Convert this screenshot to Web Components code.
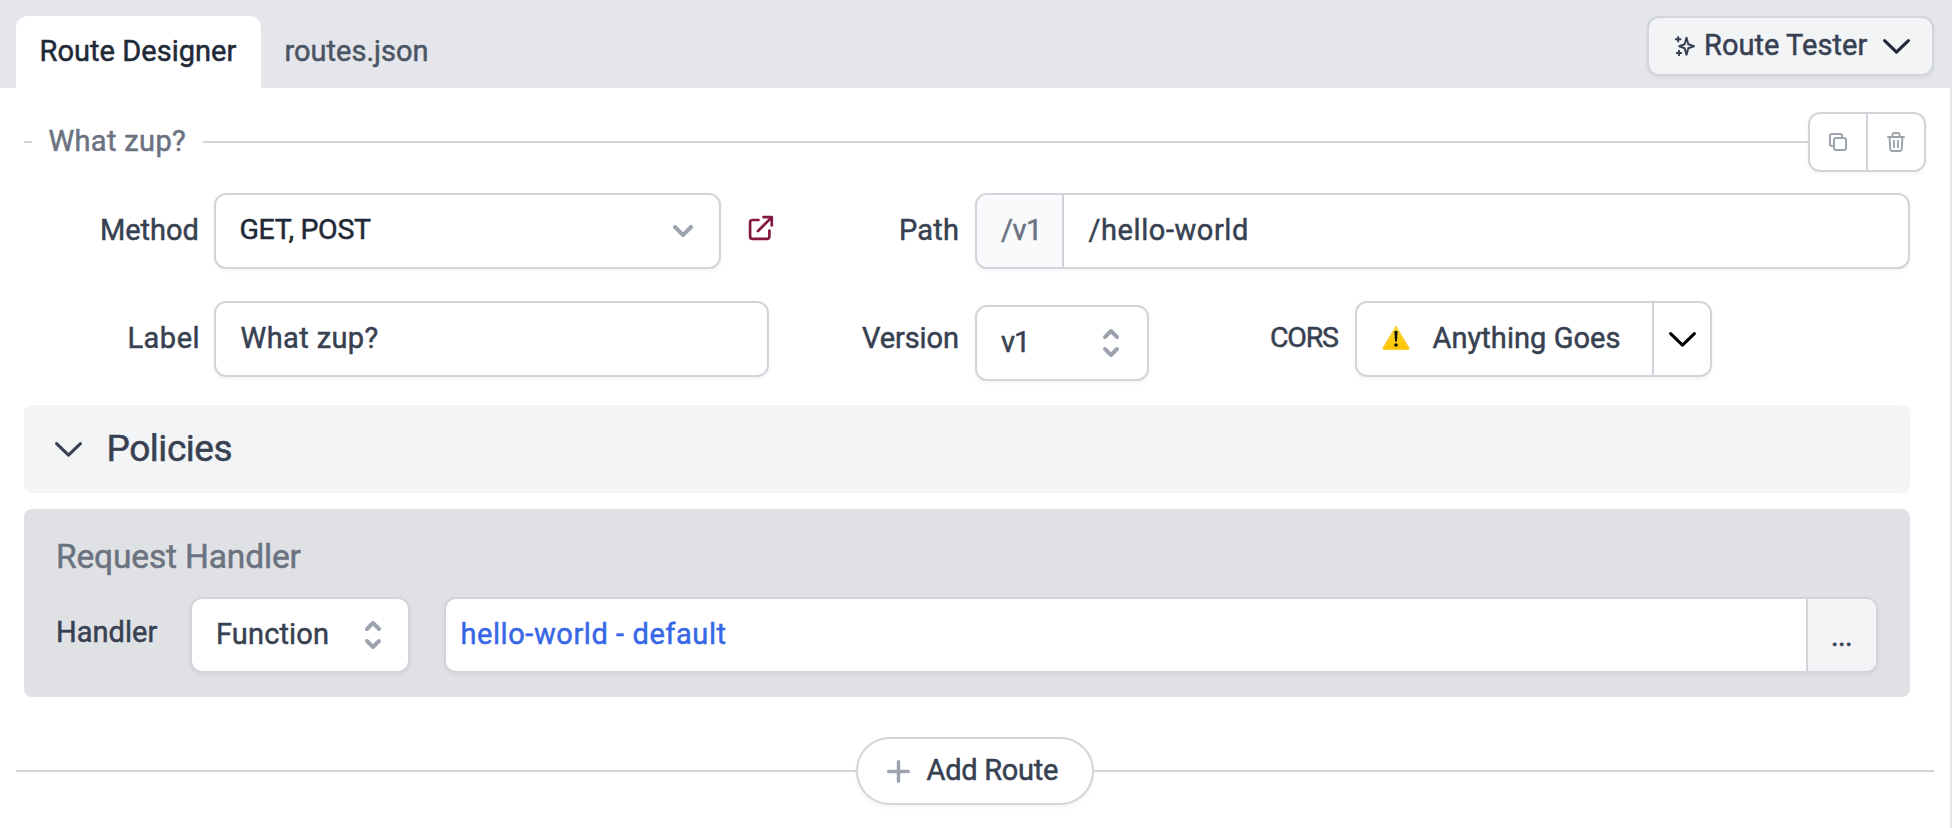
<!DOCTYPE html>
<html lang="en">
<head>
<meta charset="utf-8">
<title>Route Designer</title>
<style>
html,body{margin:0;height:100%;background:#fff}
body{font-family:Roboto,"Liberation Sans",sans-serif;font-size:29px;font-weight:400;color:#374151;overflow:hidden}
</style>
</head>
<body>
<route-app></route-app>
<script>
const make = (name, html, setup) => customElements.define(name, class extends HTMLElement {
  connectedCallback() {
    if (this.shadowRoot) return;
    const t = document.createElement('template');
    t.innerHTML = html;
    this.attachShadow({mode: 'open'}).append(t.content.cloneNode(true));
    if (setup) setup(this);
  }
});

// A single line of text, tracked so that its ink spans exactly `ink` pixels.
// The thin stroke gives a weight between regular and medium.
make('ui-text', `<style>
:host{display:block;flex:none;white-space:nowrap;line-height:34px;padding-bottom:2px}
span{display:inline-block;-webkit-text-stroke:.5px currentColor}
</style><span></span>`, el => {
  const span = el.shadowRoot.querySelector('span');
  const text = el.getAttribute('label'), ink = +el.getAttribute('ink');
  span.textContent = text;
  const cs = getComputedStyle(el);
  const ctx = document.createElement('canvas').getContext('2d');
  ctx.font = `${cs.fontWeight} ${cs.fontSize} ${cs.fontFamily}`;
  const m = ctx.measureText(text);
  const natural = m.actualBoundingBoxRight + m.actualBoundingBoxLeft;
  el.style.width = ink + 'px';
  span.style.letterSpacing = ((ink - natural) / (text.length - 1)).toFixed(3) + 'px';
  span.style.marginLeft = m.actualBoundingBoxLeft.toFixed(2) + 'px';
});

const line = (vb, d, w) => `<svg viewBox="0 0 ${vb}" fill="none" stroke="currentColor" stroke-width="${w}" stroke-linecap="round" stroke-linejoin="round">${d}</svg>`;
const solid = d => `<svg viewBox="0 0 20 20" fill="currentColor"><path fill-rule="evenodd" d="${d}"/></svg>`;
const ICONS = {
  chevron: line('27 15', '<path d="M1.6 1.6 13.5 13.2 25.4 1.6"/>', 3.1),
  drop: solid('M5.293 7.293a1 1 0 011.414 0L10 10.586l3.293-3.293a1 1 0 111.414 1.414l-4 4a1 1 0 01-1.414 0l-4-4a1 1 0 010-1.414z'),
  sort: solid('M10 3a1 1 0 01.707.293l3 3a1 1 0 01-1.414 1.414L10 5.414 7.707 7.707a1 1 0 01-1.414-1.414l3-3A1 1 0 0110 3zm-3.707 9.293a1 1 0 011.414 0L10 14.586l2.293-2.293a1 1 0 011.414 1.414l-3 3a1 1 0 01-1.414 0l-3-3a1 1 0 010-1.414z'),
  plus: line('24 24', '<path d="M12 1.8V22.2M1.8 12H22.2"/>', 3.6),
  external: line('24 24', '<path d="M9.5 4H3.5A2.4 2.4 0 0 0 1.1 6.4V20.5A2.4 2.4 0 0 0 3.5 22.9H18A2.4 2.4 0 0 0 20.4 20.5V14.5M14.5 1.2H22.8V9.5M22.4 1.6 9 15"/>', 2.7),
  copy: line('18 18', '<rect x="5" y="5" width="12" height="12" rx="2"/><path d="M5 13H3A2 2 0 0 1 1 11V3A2 2 0 0 1 3 1H11A2 2 0 0 1 13 3V5"/>', 2),
  trash: line('18 20', '<path d="M1 5H17M5.5 5V2.6A1.6 1.6 0 0 1 7.1 1H10.9A1.6 1.6 0 0 1 12.5 2.6V5M2.5 5 3.4 17.2A1.9 1.9 0 0 0 5.3 19H12.7A1.9 1.9 0 0 0 14.6 17.2L15.5 5M7 9V15.2M11 9V15.2"/>', 1.9),
  sparkle: line('20 20', '<path d="M11.5 1.8 13.3 8.2 19 10.2 13.3 12.2 11.5 18.8 9.6 12.2 4.2 10.2 9.6 8.2Z"/><path d="M3.2 1V5.6M.9 3.3H5.5M4 14.8V19.2M1.8 17H6.2"/>', 2),
  warn: `<svg viewBox="0 0 28 25"><defs><linearGradient id="g" x2="0" y2="1"><stop stop-color="#ffdb35"/><stop offset="1" stop-color="#ffc400"/></linearGradient></defs><path d="M14 .9 27.2 23.2Q27.6 24.4 26.6 24.4H1.4Q.4 24.4.8 23.2Z" fill="url(#g)" stroke="#f6c52c" stroke-width=".7" stroke-linejoin="round"/><path d="M12.3 6.2Q14 5.2 15.7 6.2L14.9 16.6H13.1Z" fill="#111"/><circle cx="14" cy="20" r="1.8" fill="#111"/></svg>`
};
make('ui-icon', `<style>:host{display:block;flex:none}svg{display:block;width:100%;height:100%;overflow:visible}</style><div></div>`, el => {
  const box = el.shadowRoot.querySelector('div');
  box.innerHTML = ICONS[el.getAttribute('name')];
  box.style.cssText = `width:${el.getAttribute('w')}px;height:${el.getAttribute('h')}px`;
});

// Rounded, bordered control; its slotted parts are laid out in a row.
make('ui-box', `<style>
:host{display:flex;align-items:center;box-sizing:border-box;flex:none;height:76px;border:2px solid #d1d5db;border-radius:12px;background:#fff;box-shadow:0 2px 4px rgba(0,0,0,.05);overflow:hidden}
</style><slot></slot>`);

make('ui-tabs', `<style>
:host{display:flex;height:88px;box-sizing:border-box;padding:16px 16px 0 16px;background:#e5e6eb}
.tab{display:flex;align-items:center;box-sizing:border-box;height:72px}
.on{width:245px;padding-left:25.5px;background:#fff;border-radius:12px 12px 0 0;color:#1f2937}
.off{padding-left:25.5px;color:#4b5563;flex:1}
ui-box{width:287px;height:60px;background:#f3f4f6;padding-left:26px}
ui-text{margin:0 14.5px 0 11px}
.tab ui-text{margin:0}
</style>
<div class="tab on"><ui-text label="Route Designer" ink="195"></ui-text></div>
<div class="tab off"><ui-text label="routes.json" ink="141"></ui-text></div>
<ui-box><ui-icon name="sparkle" w="20" h="20"></ui-icon><ui-text label="Route Tester" ink="162"></ui-text><ui-icon name="chevron" w="27" h="15" style="color:#1f2937"></ui-icon></ui-box>`);

make('route-title', `<style>
:host{display:flex;align-items:center;height:60px;margin:24px 24px 0 24px;color:#6b7280}
i{height:2px;background:#d1d5db;width:8px}
.long{flex:1}
ui-text{margin:0 18px 0 16.5px}
ui-box{width:118px;height:60px;color:#9ca3af}
.cell{display:flex;width:56px;height:100%;align-items:center;justify-content:center}
.cell+.cell{border-left:2px solid #d1d5db}
</style>
<i></i><ui-text label="What zup?" ink="136.5"></ui-text><i class="long"></i>
<ui-box><div class="cell"><ui-icon name="copy" w="18" h="18"></ui-icon></div><div class="cell"><ui-icon name="trash" w="18" h="20"></ui-icon></div></ui-box>`);

make('route-form', `<style>
:host{display:flex;flex-direction:column;gap:32px;margin-top:21px}
.row{display:grid;grid-template:76px / 197.5px 571.5px 189px 174px 206px 1fr;align-items:center;height:76px;padding-right:40px}
.row>ui-text{justify-self:end}
.c{display:flex;align-items:center;margin-left:16.5px}
.wide{grid-column:4 / 7;margin-left:17px}
.pad{padding-left:24.5px}
.prefix{display:flex;align-items:center;height:100%;box-sizing:border-box;width:87px;padding-left:24px;background:#f9fafb;border-right:2px solid #d1d5db;color:#6b7280}
.main{display:flex;align-items:center;height:100%;box-sizing:border-box;width:297px;padding-left:25px;border-right:2px solid #d1d5db}
.end{display:flex;flex:1;justify-content:center;color:#000}
.push{margin-left:auto}
</style>
<div class="row">
  <ui-text label="Method" ink="95.5"></ui-text>
  <div class="c"><ui-box class="pad" style="width:507px"><ui-text label="GET, POST" ink="130.5" style="color:#1f2937;font-size:28.5px"></ui-text><ui-icon class="push" name="drop" w="40" h="40" style="color:#9ca3af;margin-right:16px"></ui-icon></ui-box>
  <ui-icon name="external" w="24" h="24" style="color:#831843;margin:-6px 0 0 28px"></ui-icon></div>
  <ui-text label="Path" ink="57"></ui-text>
  <div class="c wide"><ui-box style="flex:1"><div class="prefix"><ui-text label="/v1" ink="36"></ui-text></div><ui-text label="/hello-world" ink="158.5" style="margin-left:24.5px"></ui-text></ui-box></div>
</div>
<div class="row">
  <ui-text label="Label" ink="68"></ui-text>
  <div class="c"><ui-box class="pad" style="width:555px"><ui-text label="What zup?" ink="137"></ui-text></ui-box></div>
  <ui-text label="Version" ink="96"></ui-text>
  <div class="c" style="margin:8px 0 0 17px"><ui-box style="width:174px;padding-left:24px"><ui-text label="v1" ink="24"></ui-text><ui-icon class="push" name="sort" w="40" h="40" style="color:#9ca3af;margin-right:16px"></ui-icon></ui-box></div>
  <ui-text label="CORS" ink="67" style="font-size:28.5px"></ui-text>
  <div class="c" style="margin-left:17px"><ui-box style="width:357px"><div class="main"><ui-icon name="warn" w="28" h="25" style="margin-top:-4px"></ui-icon><ui-text label="Anything Goes" ink="187" style="margin-left:22.5px"></ui-text></div><div class="end"><ui-icon name="chevron" w="27" h="15"></ui-icon></div></ui-box></div>
</div>`);

make('policies-bar', `<style>
:host{display:flex;align-items:center;height:88px;margin:28px 40px 0 24px;box-sizing:border-box;padding-left:30.5px;background:#f3f4f6;border-radius:8px}
ui-text{font-size:37px;line-height:42px;margin-left:28px;padding-bottom:1px}
</style><ui-icon name="chevron" w="27" h="15" style="padding-top:1px"></ui-icon><ui-text label="Policies" ink="122"></ui-text>`);

make('request-handler', `<style>
:host{display:block;box-sizing:border-box;height:188px;margin:16px 40px 0 24px;padding:29px 32px 0 34px;background:#e0e1e5;border-radius:8px}
.h{font-size:33.5px;line-height:38px;color:#6b7280}
.row{display:flex;align-items:center;margin-top:19px}
.dots{display:flex;align-items:center;justify-content:center;width:68px;height:100%;border-left:2px solid #d1d5db;background:#f3f4f6;margin-left:auto}
</style>
<ui-text class="h" label="Request Handler" ink="242.5"></ui-text>
<div class="row">
<ui-text label="Handler" ink="99.5" style="padding-bottom:6px"></ui-text>
<ui-box style="width:220px;margin-left:32.5px;padding-left:26px"><ui-text label="Function" ink="110"></ui-text><ui-icon name="sort" w="40" h="40" style="color:#9ca3af;margin:0 15px 0 auto"></ui-icon></ui-box>
<ui-box style="flex:1;margin-left:34px;padding-left:16.5px"><ui-text label="hello-world - default" ink="263" style="color:#3767e6"></ui-text><div class="dots"><ui-text label="..." ink="18" style="padding:2px 0 0"></ui-text></div></ui-box>
</div>`);

make('add-route', `<style>
:host{display:flex;align-items:center;margin:40px 16px 0}
i{flex:1;height:2px;background:#d1d5db}
ui-box{width:238px;height:68px;border-radius:34px;padding-left:28.5px}
ui-text{margin-left:17px}
</style><i></i><ui-box><ui-icon name="plus" w="23" h="23" style="color:#9ca3af"></ui-icon><ui-text label="Add Route" ink="131.5"></ui-text></ui-box><i></i>`);

make('route-app', `<style>
:host{display:flex;height:828px;width:1952px;background:#fff}
main{width:1950px}
.edge{width:2px;background:linear-gradient(#e5e6eb 88px,#e6e6e6 88px)}
</style><main><ui-tabs></ui-tabs><route-title></route-title><route-form></route-form><policies-bar></policies-bar><request-handler></request-handler><add-route></add-route></main><div class="edge"></div>`);
</script>
</body>
</html>
